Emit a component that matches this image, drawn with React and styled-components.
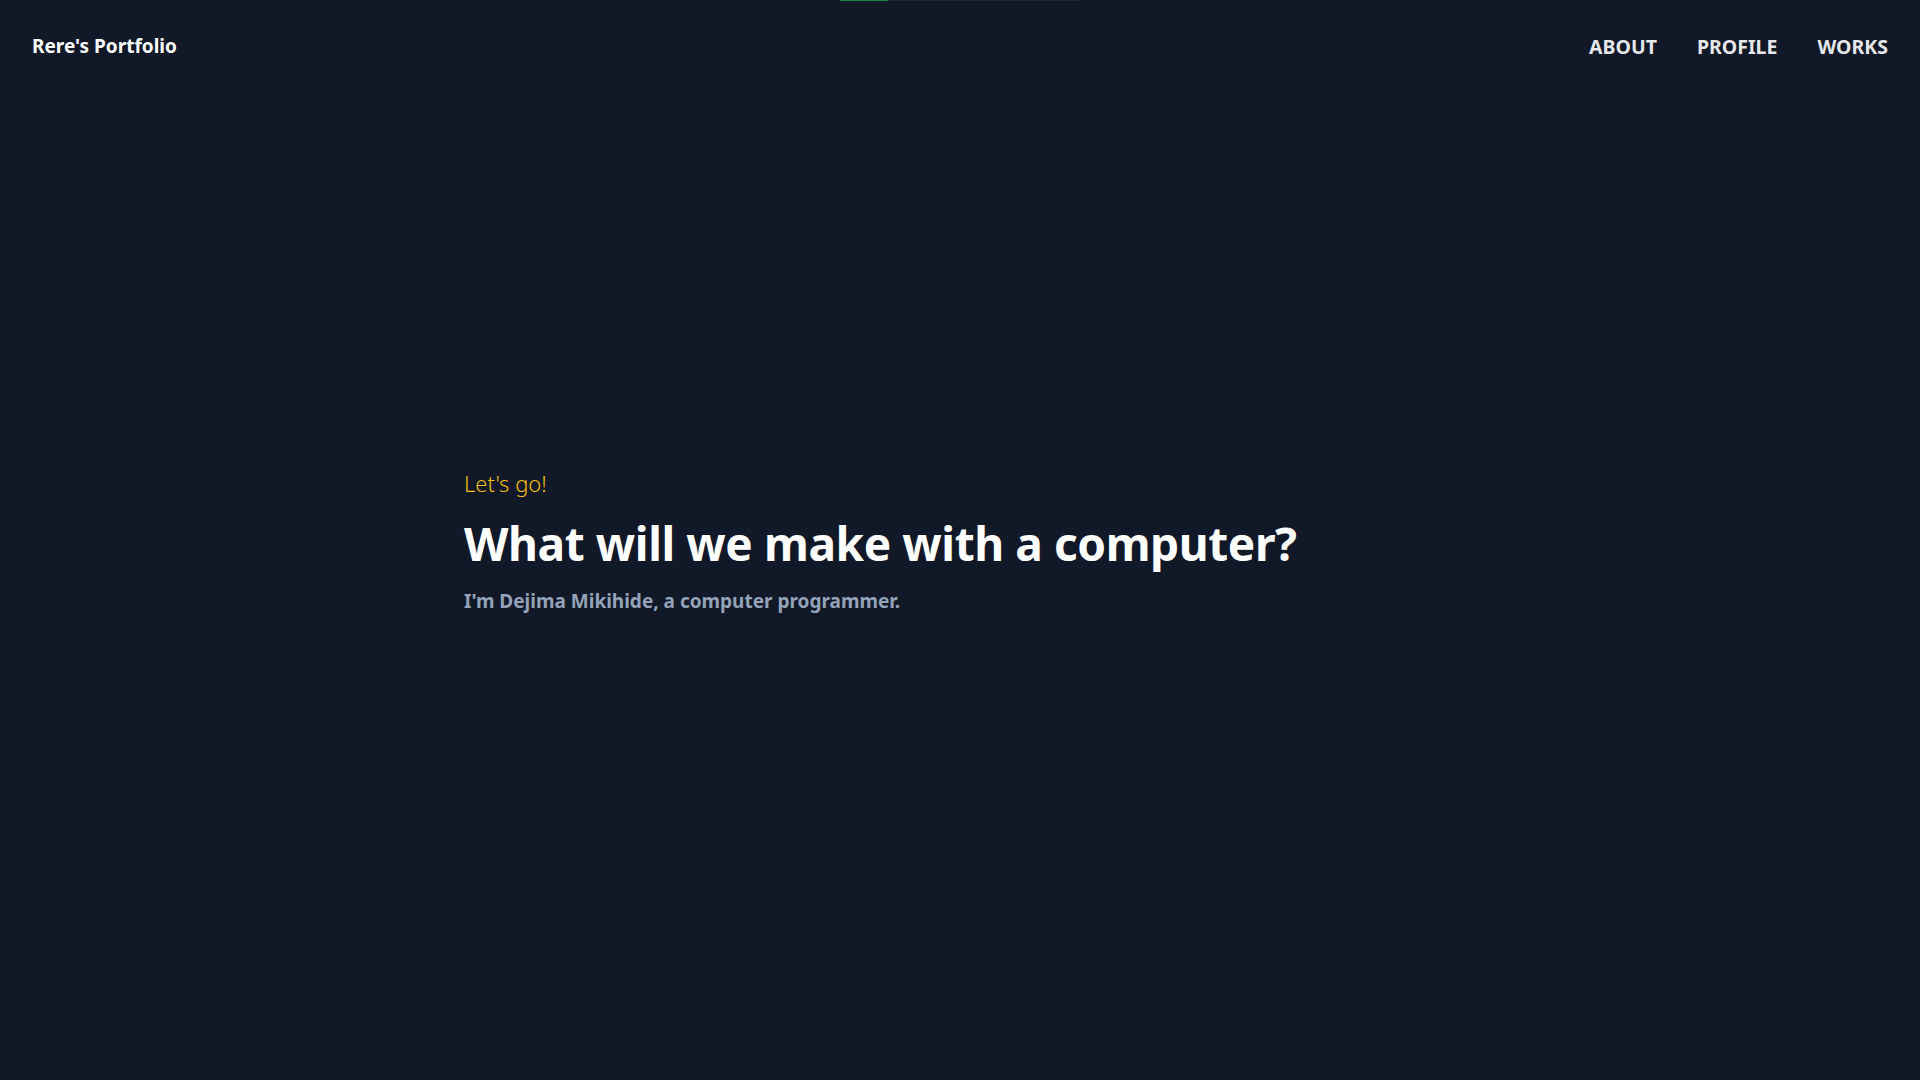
import React from "react";
import styled, { createGlobalStyle } from "styled-components";

const GlobalStyle = createGlobalStyle`
  html, body {
    margin: 0;
    padding: 0;
    background-color: #111827;
  }
  body {
    font-family: "Noto Sans", "Open Sans", sans-serif;
    color: #f3f4f6;
  }
`;

const Page = styled.div`
  position: relative;
  min-height: 1080px;
  display: flex;
  flex-direction: column;
`;

const Progress = styled.div`
  position: absolute;
  top: 0;
  left: 840px;
  width: 240px;
  height: 1px;
  background-color: #222327;
`;

const ProgressFill = styled.div`
  height: 100%;
  background-color: #15803d;
`;

const Header = styled.header`
  display: flex;
  justify-content: space-between;
  align-items: center;
  height: 92px;
  padding: 0 32px;
  box-sizing: border-box;
`;

const Logo = styled.a`
  font-size: 19px;
  font-weight: 700;
  color: #fff;
  text-decoration: none;
`;

const Nav = styled.nav`
  display: flex;
  gap: 40px;
`;

const NavLink = styled.a`
  font-size: 19.5px;
  font-weight: 700;
  color: #e5e7eb;
  text-decoration: none;
  text-transform: uppercase;
`;

const Hero = styled.main`
  flex: 1;
  display: flex;
  align-items: center;
  padding-bottom: 92px;
`;

const HeroInner = styled.div`
  width: 100%;
  max-width: 992px;
  margin: 0 auto;
  padding-top: 2px;
`;

const Kicker = styled.p`
  margin: 0;
  font-size: 22px;
  font-weight: 300;
  color: #f2bd12;
`;

const Title = styled.h1`
  margin: 18px 0 16px;
  font-size: 46px;
  font-weight: 700;
  letter-spacing: -0.4px;
  color: #fff;
  line-height: 1.2;
`;

const Lead = styled.p`
  margin: 0;
  font-size: 19px;
  font-weight: 700;
  color: #94a3b8;
`;

export default function App() {
  return (
    <>
      <GlobalStyle />
      <Page>
        <Progress>
          <ProgressFill style={{ width: "20%" }} />
        </Progress>
        <Header>
          <Logo href="#">Rere's Portfolio</Logo>
          <Nav>
            <NavLink href="#about">About</NavLink>
            <NavLink href="#profile">Profile</NavLink>
            <NavLink href="#works">Works</NavLink>
          </Nav>
        </Header>
        <Hero>
          <HeroInner>
            <Kicker>Let's go!</Kicker>
            <Title>What will we make with a computer?</Title>
            <Lead>I'm Dejima Mikihide, a computer programmer.</Lead>
          </HeroInner>
        </Hero>
      </Page>
    </>
  );
}
